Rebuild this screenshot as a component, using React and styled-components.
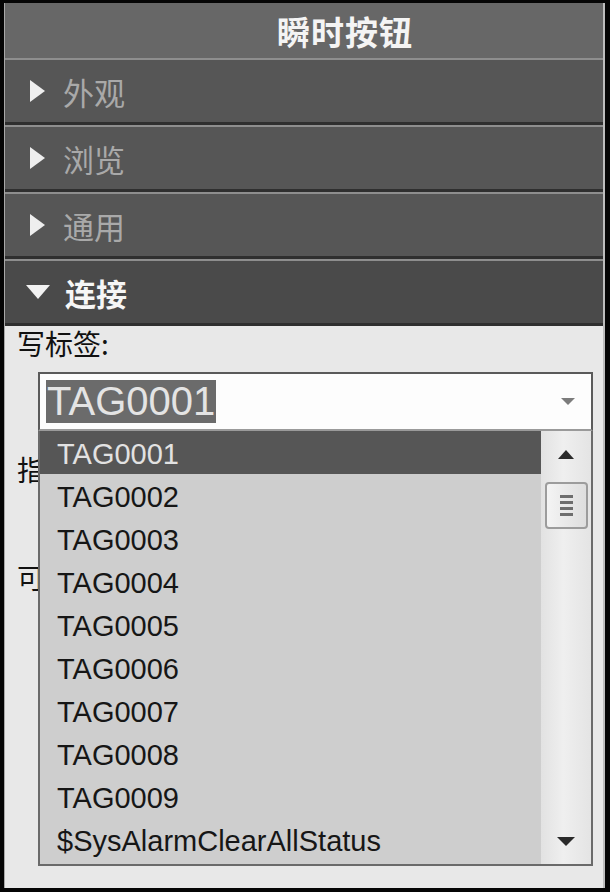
import styled, { createGlobalStyle } from "styled-components";

const GlobalStyle = createGlobalStyle`
  html, body {
    margin: 0;
    padding: 0;
    background: #050505;
  }
  * { box-sizing: border-box; }
`;

const Frame = styled.div`
  width: 610px;
  height: 892px;
  padding: 3px 5px 4px 4px;
  background: #050505;
  font-family: "Noto Sans CJK SC", "Noto Sans", sans-serif;
`;

const Panel = styled.div`
  height: 100%;
  display: flex;
  flex-direction: column;
  background: #e8e8e8;
  border-left: 1px solid #a8a8a8;
  border-right: 2px solid #bdbdbd;
`;

const Header = styled.div`
  height: 55px;
  flex: none;
  display: flex;
  align-items: center;
  justify-content: center;
  padding-left: 82px;
  background: #676767;
  color: #f4f4f4;
  font-size: 33px;
  font-weight: 700;
  letter-spacing: 1px;
`;

const Section = styled.div`
  height: 67px;
  flex: none;
  display: flex;
  align-items: center;
  gap: ${(p) => (p.$open ? "15px" : "18px")};
  padding-left: ${(p) => (p.$open ? "21px" : "25px")};
  background: ${(p) => (p.$open ? "#4a4a4a" : "#565656")};
  border-top: 2px solid #8e8e8e;
  border-bottom: 3px solid #2f2f2f;
  color: ${(p) => (p.$open ? "#f6f6f6" : "#a9a9a9")};
  font-size: 31px;
  font-weight: ${(p) => (p.$open ? 700 : 400)};
`;

const Body = styled.div`
  flex: 1;
  display: flex;
  flex-direction: column;
  padding: 0 0 0 12px;
  color: #111;
  font-size: 28px;
`;

const Label = styled.div`
  height: ${(p) => p.$h || "46px"};
  line-height: 32px;
  padding-top: ${(p) => p.$top || "0px"};
`;

const Combo = styled.div`
  position: relative;
  margin-left: 21px;
  width: 555px;
  height: 59px;
  flex: none;
  display: flex;
  align-items: center;
  justify-content: space-between;
  padding: 0 16px 0 6px;
  background: #fdfdfd;
  border: 2px solid #5a5a5a;
  border-bottom-color: #9a9a9a;
`;

const Selected = styled.span`
  background: #6b6b6b;
  color: #e4e4e4;
  font-family: "Liberation Sans", Arial, sans-serif;
  font-size: 40px;
  line-height: 43px;
  padding: 0 1px;
`;

const DropList = styled.div`
  position: absolute;
  top: 57px;
  left: -2px;
  width: 555px;
  height: 435px;
  display: flex;
  background: #cecece;
  border: 2px solid #6a6a6a;
  border-top: none;
`;

const Items = styled.ul`
  flex: 1;
  list-style: none;
  margin: 0;
  padding: 0;
`;

const Item = styled.li`
  height: 43px;
  display: flex;
  align-items: center;
  padding: 4px 0 0 17px;
  font-family: "Liberation Sans", Arial, sans-serif;
  font-size: 29px;
  color: ${(p) => (p.$active ? "#e2e2e2" : "#161616")};
  background: ${(p) => (p.$active ? "#565656" : "transparent")};
`;

const ScrollBar = styled.div`
  width: 50px;
  flex: none;
  display: flex;
  flex-direction: column;
  align-items: center;
  background: linear-gradient(90deg, #e2e2e2 0%, #efefef 45%, #e4e4e4 100%);
`;

const ArrowBtn = styled.div`
  height: 46px;
  width: 100%;
  display: flex;
  align-items: center;
  justify-content: center;
  flex: none;
`;

const Thumb = styled.div`
  width: 43px;
  height: 47px;
  margin-top: 5px;
  display: flex;
  flex-direction: column;
  align-items: center;
  justify-content: center;
  gap: 3px;
  border: 2px solid #9c9c9c;
  border-radius: 4px;
  background: linear-gradient(90deg, #f4f4f4 0%, #dedede 100%);
`;

const Grip = styled.span`
  width: 13px;
  height: 3px;
  background: #6e6e6e;
`;

const Track = styled.div`
  flex: 1;
`;

const Tri = ({ dir, w, h, color }) => {
  const pts = {
    right: `0,0 ${w},${h / 2} 0,${h}`,
    down: `0,0 ${w},0 ${w / 2},${h}`,
    up: `0,${h} ${w},${h} ${w / 2},0`,
  }[dir];
  return (
    <svg width={w} height={h} viewBox={`0 0 ${w} ${h}`}>
      <polygon points={pts} fill={color} />
    </svg>
  );
};

const sections = ["外观", "浏览", "通用"];
const tags = [
  "TAG0001", "TAG0002", "TAG0003", "TAG0004", "TAG0005",
  "TAG0006", "TAG0007", "TAG0008", "TAG0009", "$SysAlarmClearAllStatus",
];

export default function App() {
  return (
    <>
      <GlobalStyle />
      <Frame>
        <Panel>
          <Header>瞬时按钮</Header>
          {sections.map((s) => (
            <Section key={s}>
              <Tri dir="right" w={15} h={22} color="#eeeeee" />
              {s}
            </Section>
          ))}
          <Section $open>
            <Tri dir="down" w={24} h={14} color="#f2f2f2" />
            连接
          </Section>
          <Body>
            <Label $h="46px" $top="1px">写标签:</Label>
            <Combo>
              <Selected>TAG0001</Selected>
              <Tri dir="down" w={14} h={7} color="#7c7c7c" />
              <DropList>
                <Items>
                  {tags.map((t, i) => (
                    <Item key={t} $active={i === 0}>{t}</Item>
                  ))}
                </Items>
                <ScrollBar>
                  <ArrowBtn>
                    <Tri dir="up" w={16} h={9} color="#2a2a2a" />
                  </ArrowBtn>
                  <Thumb>
                    <Grip />
                    <Grip />
                    <Grip />
                    <Grip />
                  </Thumb>
                  <Track />
                  <ArrowBtn>
                    <Tri dir="down" w={18} h={9} color="#2a2a2a" />
                  </ArrowBtn>
                </ScrollBar>
              </DropList>
            </Combo>
            <Label $h="130px" $top="22px">指</Label>
            <Label $h="60px">可</Label>
          </Body>
        </Panel>
      </Frame>
    </>
  );
}
